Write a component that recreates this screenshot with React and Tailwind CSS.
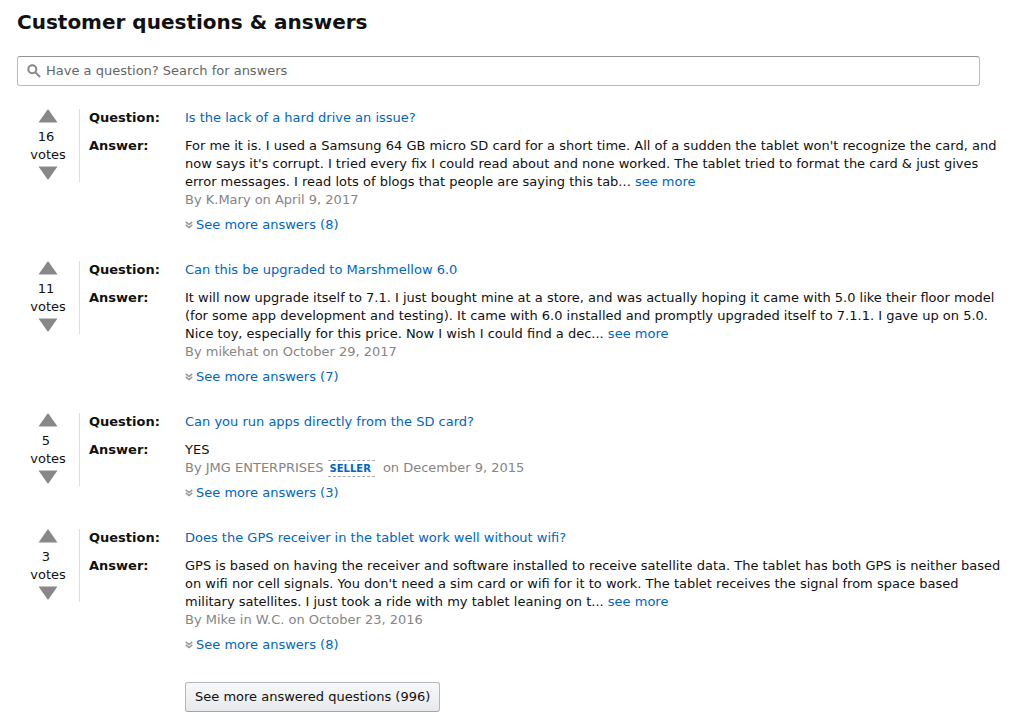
import React from "react";

const questions = [
  {
    votes: 16,
    question: "Is the lack of a hard drive an issue?",
    answer: [
      "For me it is. I used a Samsung 64 GB micro SD card for a short time. All of a sudden the tablet won't recognize the card, and",
      "now says it's corrupt. I tried every fix I could read about and none worked. The tablet tried to format the card & just gives",
      "error messages. I read lots of blogs that people are saying this tab...",
    ],
    truncated: true,
    author: "K.Mary",
    date: "April 9, 2017",
    more: 8,
  },
  {
    votes: 11,
    question: "Can this be upgraded to Marshmellow 6.0",
    answer: [
      "It will now upgrade itself to 7.1. I just bought mine at a store, and was actually hoping it came with 5.0 like their floor model",
      "(for some app development and testing). It came with 6.0 installed and promptly upgraded itself to 7.1.1. I gave up on 5.0.",
      "Nice toy, especially for this price. Now I wish I could find a dec...",
    ],
    truncated: true,
    author: "mikehat",
    date: "October 29, 2017",
    more: 7,
  },
  {
    votes: 5,
    question: "Can you run apps directly from the SD card?",
    answer: ["YES"],
    author: "JMG ENTERPRISES",
    seller: true,
    date: "December 9, 2015",
    more: 3,
  },
  {
    votes: 3,
    question: "Does the GPS receiver in the tablet work well without wifi?",
    answer: [
      "GPS is based on having the receiver and software installed to receive satellite data. The tablet has both GPS is neither based",
      "on wifi nor cell signals. You don't need a sim card or wifi for it to work. The tablet receives the signal from space based",
      "military satellites. I just took a ride with my tablet leaning on t...",
    ],
    truncated: true,
    author: "Mike in W.C.",
    date: "October 23, 2016",
    more: 8,
  },
];

function Votes({ count }) {
  return (
    <div className="flex h-[73px] w-[63px] shrink-0 flex-col items-center border-r border-[#ddd] text-center">
      <button type="button" aria-label="Vote up">
        <svg className="block h-[14px] w-[20px]" viewBox="0 0 20 14" fill="#888">
          <path d="M10 0 19.5 13.5H.5Z" />
        </svg>
      </button>
      <div className="mt-[5px] pr-1">{count}</div>
      <div>votes</div>
      <button type="button" aria-label="Vote down" className="mt-[2px]">
        <svg className="block h-[14px] w-[20px]" viewBox="0 0 20 14" fill="#888">
          <path d="M.5 .5h19L10 14Z" />
        </svg>
      </button>
    </div>
  );
}

function Chevrons() {
  return (
    <svg className="h-2 w-2 shrink-0" viewBox="0 0 8 8" fill="none" stroke="#999" strokeWidth="1.5">
      <path d="M.7 .8 4 3.5 7.3 .8M.7 3.8 4 6.5 7.3 3.8" />
    </svg>
  );
}

function Entry({ item }) {
  return (
    <article className="flex items-start">
      <Votes count={item.votes} />
      <dl className="grid min-w-0 flex-1 grid-cols-[96px_minmax(0,1fr)] gap-y-[10px] pl-[9px]">
        <dt className="font-bold">Question:</dt>
        <dd>
          <a href="#question" className="text-[#0066c0]">{item.question}</a>
        </dd>
        <dt className="font-bold">Answer:</dt>
        <dd>
          <p>
            {item.answer.map((line, index) => (
              <React.Fragment key={line}>
                {index > 0 && <br />}
                {line}
              </React.Fragment>
            ))}
            {item.truncated && (
              <>
                {" "}
                <a href="#answer" className="text-[#0066c0]">see more</a>
              </>
            )}
          </p>
          <p className="flex items-center text-[#858585]">
            By {item.author}
            {item.seller && (
              <span className="mr-1 ml-1 h-[17px] border-y border-dashed border-[#aaa] pr-1 pl-[2px] text-[10px] leading-[15px] font-bold text-[#0066c0]">
                SELLER
              </span>
            )}
            <span className="ml-1">on {item.date}</span>
          </p>
          <a href="#answers" className="mt-[7px] flex w-fit items-center gap-[3px] text-[#0066c0]">
            <Chevrons />
            See more answers ({item.more})
          </a>
        </dd>
      </dl>
    </article>
  );
}

export default function App() {
  return (
    <main className="min-h-screen bg-white pt-[9px] pr-[16px] pb-[13px] pl-[17px] font-['DejaVu_Sans',Verdana,sans-serif] text-[13px] leading-[18px] text-[#111]">
      <h1 className="text-[20px] leading-[26px] font-bold">Customer questions &amp; answers</h1>
      <label className="mt-[21px] mr-[28px] flex h-[30px] items-center gap-[5px] rounded-[3px] border border-[#bbb] border-t-[#949494] px-[9px]">
        <svg className="h-[14px] w-[14px] shrink-0" viewBox="0 0 14 14" fill="none" stroke="#888" strokeWidth="2">
          <circle cx="5.3" cy="5.3" r="4" />
          <path d="m8.4 8.4 4.6 4.6" />
        </svg>
        <input
          type="search"
          aria-label="Search questions and answers"
          placeholder="Have a question? Search for answers"
          className="min-w-0 flex-1 bg-transparent outline-none placeholder:text-[#666]"
        />
      </label>
      <section className="mt-[23px] flex flex-col gap-[27px]">
        {questions.map((item) => (
          <Entry key={item.question} item={item} />
        ))}
      </section>
      <button
        type="button"
        className="mt-[28px] ml-[168px] h-[30px] rounded-[3px] border border-[#b4b6bd] border-b-[#a2a6ac] bg-linear-to-b from-[#f7f8fa] to-[#e7e9ec] px-[9px]"
      >
        See more answered questions (996)
      </button>
    </main>
  );
}
